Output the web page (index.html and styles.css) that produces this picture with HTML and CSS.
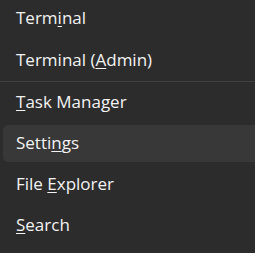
FILE: index.html
```html
<!DOCTYPE html>
<html>
<head>
<meta charset="utf-8">
<link rel="stylesheet" href="styles.css">
</head>
<body>
<div class="menu">
  <div class="item first">Term<u>i</u>nal</div>
  <div class="item">Terminal (<u>A</u>dmin)</div>
  <div class="sep"></div>
  <div class="item"><u>T</u>ask Manager</div>
  <div class="item hover">Setti<u>n</u>gs</div>
  <div class="item">File <u>E</u>xplorer</div>
  <div class="item"><u>S</u>earch</div>
</div>
</body>
</html>
```
FILE: styles.css
```css
html, body {
  margin: 0;
  padding: 0;
  background: #2c2c2c;
  overflow: hidden;
}
.menu {
  display: flex;
  flex-direction: column;
  font-family: "Open Sans", "Noto Sans", sans-serif;
  font-size: 17px;
  color: #f3f3f3;
}
.item {
  height: 37px;
  line-height: 36px;
  margin: 4px 0 0 3px;
  padding-left: 13px;
  border-radius: 5px 0 0 5px;
  white-space: nowrap;
}
.item.first {
  margin-top: 0;
  margin-bottom: 1px;
}
.sep {
  height: 1px;
  background: #414141;
  margin: 2px 0 -2px 0;
}
.item.hover {
  background: #383838;
}
u {
  text-decoration: underline;
  text-decoration-thickness: 1px;
  text-underline-offset: 2px;
}
```
